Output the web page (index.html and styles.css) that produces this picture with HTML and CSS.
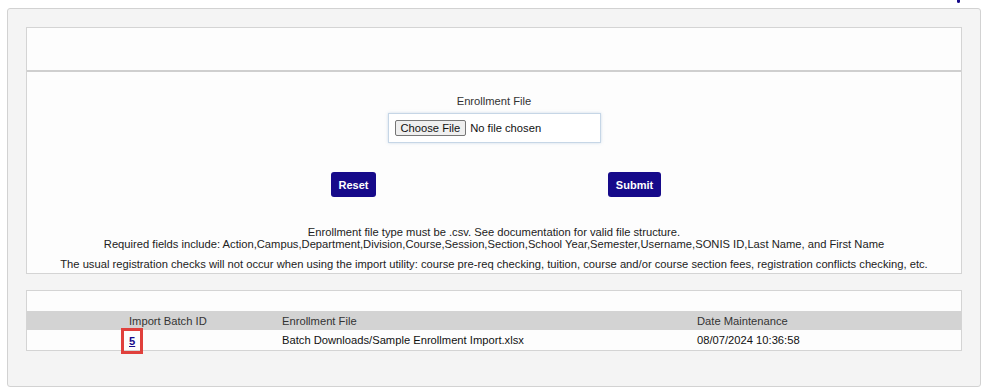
FILE: index.html
```html
<!DOCTYPE html>
<html lang="en">
<head>
    <meta charset="UTF-8">
    <meta name="viewport" content="width=device-width, initial-scale=1.0">
    <title>Enrollment Import</title>
    <link rel="stylesheet" href="styles.css">
</head>
<body>
    <div class="top-strip">
        <span class="help-tail"></span>
    </div>

    <div class="panel">
        <div class="card upload-card">
            <div class="card-head"></div>

            <div class="upload-body">
                <div class="field-label">Enrollment File</div>
                <div class="file-box">
                    <span class="file-button">Choose File</span>
                    <span class="file-name">No file chosen</span>
                </div>

                <div class="actions">
                    <div class="action-cell"><button class="btn">Reset</button></div>
                    <div class="action-cell"><button class="btn">Submit</button></div>
                </div>

                <div class="notes">
                    <p class="note-lines">Enrollment file type must be .csv. See documentation for valid file structure.<br>
                    Required fields include: Action,Campus,Department,Division,Course,Session,Section,School Year,Semester,Username,SONIS ID,Last Name, and First Name</p>
                    <p class="note-warn">The usual registration checks will not occur when using the import utility: course pre-req checking, tuition, course and/or course section fees, registration conflicts checking, etc.</p>
                </div>
            </div>
        </div>

        <div class="card batch-card">
            <div class="batch-top"></div>
            <div class="batch-row batch-header">
                <span>Import Batch ID</span>
                <span>Enrollment File</span>
                <span>Date Maintenance</span>
            </div>
            <div class="batch-row">
                <span><a href="#" class="batch-link">5</a></span>
                <span>Batch Downloads/Sample Enrollment Import.xlsx</span>
                <span>08/07/2024 10:36:58</span>
            </div>
        </div>
    </div>
</body>
</html>
```

FILE: styles.css
```css
:root {
    --navy: #160a8a;
    --border: #d4d4d4;
    --panel-bg: #f4f4f4;
    --text-color: #2a2a2a;
}

* {
    box-sizing: border-box;
}

body {
    font-family: "Liberation Sans", Arial, sans-serif;
    font-size: 11.2px;
    color: var(--text-color);
    background: #fff;
    margin: 0;
    padding: 0 5px 0 7px;
}

.top-strip {
    height: 8px;
    display: flex;
    justify-content: flex-end;
    padding-right: 21px;
}

.help-tail {
    width: 3px;
    height: 3px;
    background: var(--navy);
    border-radius: 0 0 2px 2px;
}

.panel {
    background: var(--panel-bg);
    border: 1px solid #d2d2d2;
    border-radius: 3px;
    height: 379px;
    padding: 18px 18px 0 18px;
    display: flex;
    flex-direction: column;
    gap: 16px;
}

.card {
    background: #fdfdfd;
    border: 1px solid var(--border);
}

.card-head {
    height: 44px;
    border-bottom: 2px solid #cfcfcf;
}

.upload-body {
    text-align: center;
    padding: 22px 0 3px;
}

.field-label {
    line-height: 14px;
    color: #333;
}

.file-box {
    width: 213px;
    height: 30px;
    margin: 5px auto 0;
    background: #fff;
    border: 1px solid #c6d6e6;
    box-shadow: 0 0 3px rgba(120, 160, 200, 0.35);
    display: flex;
    align-items: center;
    gap: 4px;
    padding-left: 6px;
    text-align: left;
    color: #111;
}

.file-button {
    background: #efefef;
    border: 1px solid #767676;
    border-radius: 2px;
    padding: 0 5px;
    line-height: 14px;
}

.actions {
    display: flex;
    justify-content: center;
    margin-top: 29px;
}

.action-cell {
    width: 281px;
    display: flex;
    justify-content: center;
}

.btn {
    background: var(--navy);
    color: #fff;
    border: none;
    border-radius: 3px;
    height: 25px;
    padding: 0 8px;
    font-family: inherit;
    font-size: 11px;
    font-weight: bold;
    cursor: pointer;
}

.notes p {
    margin: 0;
    line-height: 12px;
    color: #222;
}

.notes .note-lines {
    margin-top: 29px;
}

.notes .note-warn {
    margin-top: 8px;
}

.batch-top {
    height: 20px;
}

.batch-row {
    display: grid;
    grid-template-columns: 153px 415px 1fr;
    padding-left: 102px;
    height: 20px;
    align-items: center;
    color: #111;
}

.batch-header {
    background: #d3d3d3;
    height: 19px;
    color: #333;
}

.batch-link {
    display: inline-block;
    color: var(--navy);
    font-weight: bold;
    outline: 3px solid #e0403c;
    outline-offset: 4px;
    padding: 0 1px;
    line-height: 12px;
    margin: 2px 0 0 -1px;
}
```
